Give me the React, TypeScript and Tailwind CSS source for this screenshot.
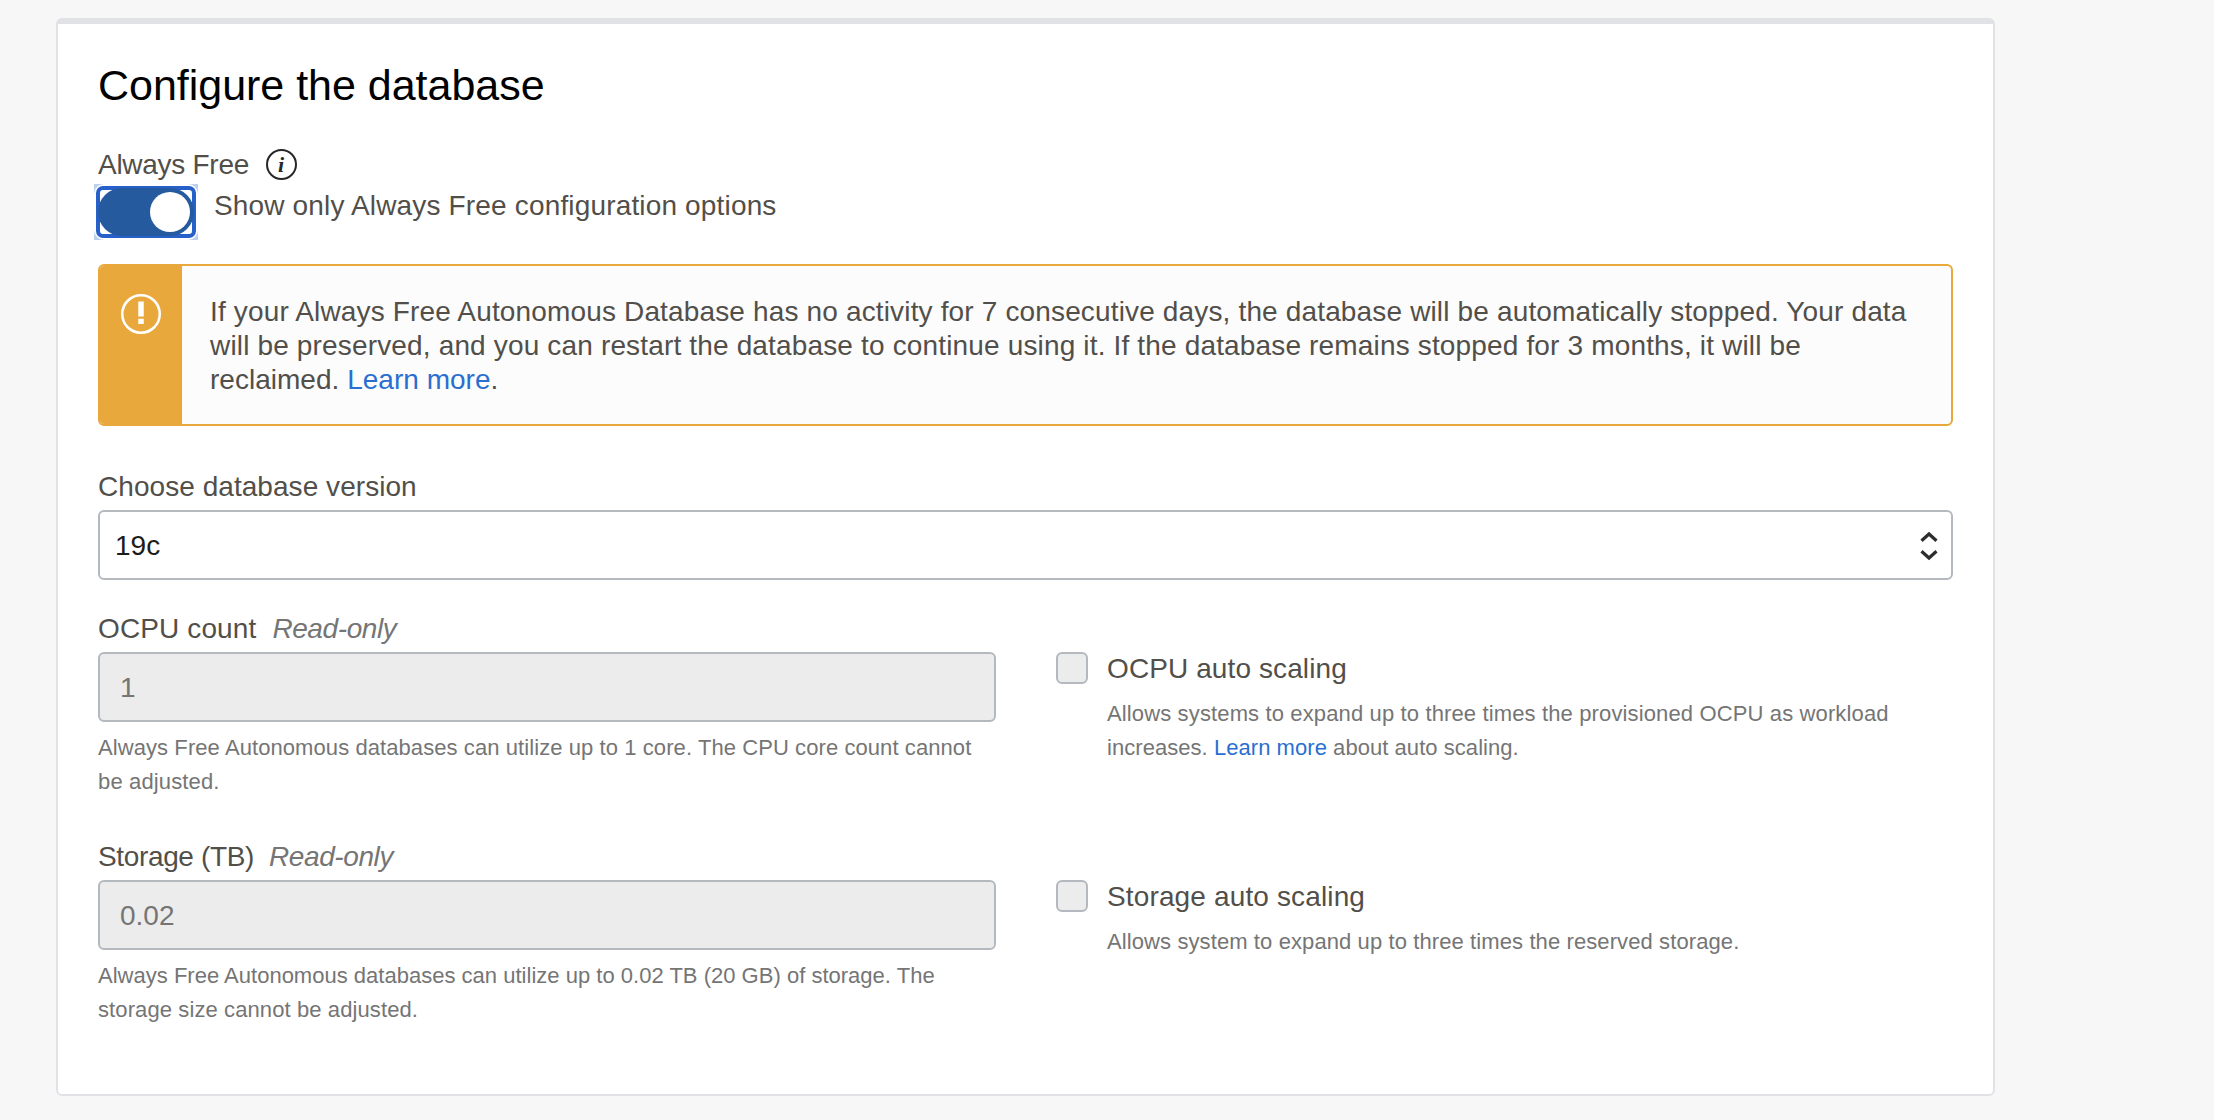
import type { ReactNode } from 'react';

function Toggle() {
  return (
    <div className="relative h-12 w-24 shrink-0">
      <div className="absolute -inset-1 bg-[#bcd0ef]" />
      <div className="absolute -inset-1 rounded-[10px] bg-white" />
      <div className="absolute -inset-0.5 rounded-[7px] border-4 border-[#2760c8]" />
      <div className="absolute inset-0 rounded-full bg-[#265a9e]" />
      <div className="absolute top-1 right-1 size-10 rounded-full bg-white" />
    </div>
  );
}

function InfoIcon() {
  return (
    <span className="ml-[17px] flex size-[31px] items-center justify-center rounded-full border-2 border-[#262626] pr-px font-['Liberation_Serif',serif] text-[22px] leading-none font-bold italic text-[#262626]">
      i
    </span>
  );
}

function WarningIcon() {
  return (
    <svg width="40" height="40" viewBox="0 0 40 40" fill="none">
      <circle cx="20" cy="20" r="18.75" stroke="#fff" strokeWidth="2.5" />
      <path d="M20 7.5V22.5M20 24.7V30" stroke="#fff" strokeWidth="5.5" />
    </svg>
  );
}

function SelectArrows() {
  return (
    <svg className="mt-0.5" width="20" height="32" viewBox="0 0 20 32" fill="none" stroke="#2d2d2d" strokeWidth="3.2">
      <path d="M2.5 10.8L10 4L17.5 10.8M2.5 21.2L10 28L17.5 21.2" />
    </svg>
  );
}

function Link({ children }: { children: ReactNode }) {
  return (
    <a href="#" className="text-[#2a6fd0]">
      {children}
    </a>
  );
}

function ReadOnlyField({ label, value, valueClass, help }: { label: ReactNode; value: string; valueClass: string; help: ReactNode }) {
  return (
    <div className="w-[898px]">
      <div className="flex h-[31px] leading-[31px]">{label}</div>
      <div className={`mt-2 flex h-[70px] items-center rounded-md border-2 border-[#b4b9c0] bg-[#ececec] pt-0.5 text-[#757575] ${valueClass}`}>{value}</div>
      <div className="mt-[9px] text-[22px] leading-[34px] text-[#757575]">{help}</div>
    </div>
  );
}

function ScalingOption({ label, help }: { label: ReactNode; help: ReactNode }) {
  return (
    <div className="flex gap-[19px] pt-[39px]">
      <div className="size-8 rounded-md border-2 border-[#b4b9c0] bg-[#ececec]" />
      <div className="pt-px">
        <div className="leading-[31px]">{label}</div>
        <div className="mt-[13px] text-[22px] leading-[34px] text-[#757575]">{help}</div>
      </div>
    </div>
  );
}

export default function App() {
  return (
    <div className="h-[1120px] w-[2214px] overflow-hidden bg-[#f7f7f7] pt-[18px] pl-14 font-['Liberation_Sans',Arial,sans-serif] text-[28px] whitespace-nowrap text-[#524f4a]">
      <main className="h-[1078px] w-[1939px] rounded-md border-2 border-t-[6px] border-[#e0e2e6] bg-white px-10 pt-[37px]">
        <h1 className="text-[43px] leading-[48px] tracking-[-0.02px] text-black">Configure the database</h1>

        <div className="mt-10 flex h-[31px] items-center">
          <span className="leading-[31px] tracking-[-0.277px]">Always Free</span>
          <InfoIcon />
        </div>
        <div className="mt-2 flex h-12 gap-5">
          <Toggle />
          <span className="mt-0.5 leading-[31px] tracking-[0.16px]">Show only Always Free configuration options</span>
        </div>

        <div className="mt-7 flex h-[162px] overflow-hidden rounded-md border-2 border-[#e9a83b] bg-[#fcfcfc]">
          <div className="flex w-[82px] justify-center bg-[#e9a83b] pt-7">
            <WarningIcon />
          </div>
          <div className="pt-[29px] pl-7 leading-[34px]">
            <div className="tracking-[0.152px]">
              If your Always Free Autonomous Database has no activity for 7 consecutive days, the database will be automatically stopped. Your data
            </div>
            <div className="tracking-[0.158px]">
              will be preserved, and you can restart the database to continue using it. If the database remains stopped for 3 months, it will be
            </div>
            <div className="tracking-[0.018px]">
              reclaimed. <Link>Learn more</Link>.
            </div>
          </div>
        </div>

        <div className="mt-[45px] leading-[31px] tracking-[0.05px]">Choose database version</div>
        <div className="mt-2 flex h-[70px] items-center justify-between rounded-md border-2 border-[#b4b9c0] bg-white pr-3 pl-[15px] text-[#1c1c1c]">
          <span className="pt-0.5">19c</span>
          <SelectArrows />
        </div>

        <div className="mt-[33px] flex h-[228px] gap-[60px]">
          <ReadOnlyField
            label={
              <>
                <span className="tracking-[0.12px]">OCPU count</span>
                <span className="ml-4 tracking-[-0.4px] text-[#757575] italic">Read-only</span>
              </>
            }
            value="1"
            valueClass="pl-5"
            help={
              <>
                <div className="tracking-[0.08px]">Always Free Autonomous databases can utilize up to 1 core. The CPU core count cannot</div>
                <div className="tracking-[0.14px]">be adjusted.</div>
              </>
            }
          />
          <ScalingOption
            label={<span className="tracking-[0.1px]">OCPU auto scaling</span>}
            help={
              <>
                <div className="tracking-[0.134px]">Allows systems to expand up to three times the provisioned OCPU as workload</div>
                <div className="tracking-[0.05px]">
                  increases. <Link>Learn more</Link> about auto scaling.
                </div>
              </>
            }
          />
        </div>
        <div className="flex h-[228px] gap-[60px]">
          <ReadOnlyField
            label={
              <>
                <span className="tracking-[-0.359px]">Storage (TB)</span>
                <span className="ml-[15px] tracking-[-0.4px] text-[#757575] italic">Read-only</span>
              </>
            }
            value="0.02"
            valueClass="pl-5"
            help={
              <>
                <div className="tracking-[0.012px]">Always Free Autonomous databases can utilize up to 0.02 TB (20 GB) of storage. The</div>
                <div className="tracking-[0.102px]">storage size cannot be adjusted.</div>
              </>
            }
          />
          <ScalingOption
            label={<span className="tracking-[0.14px]">Storage auto scaling</span>}
            help={<div className="tracking-[0.1px]">Allows system to expand up to three times the reserved storage.</div>}
          />
        </div>
      </main>
    </div>
  );
}
